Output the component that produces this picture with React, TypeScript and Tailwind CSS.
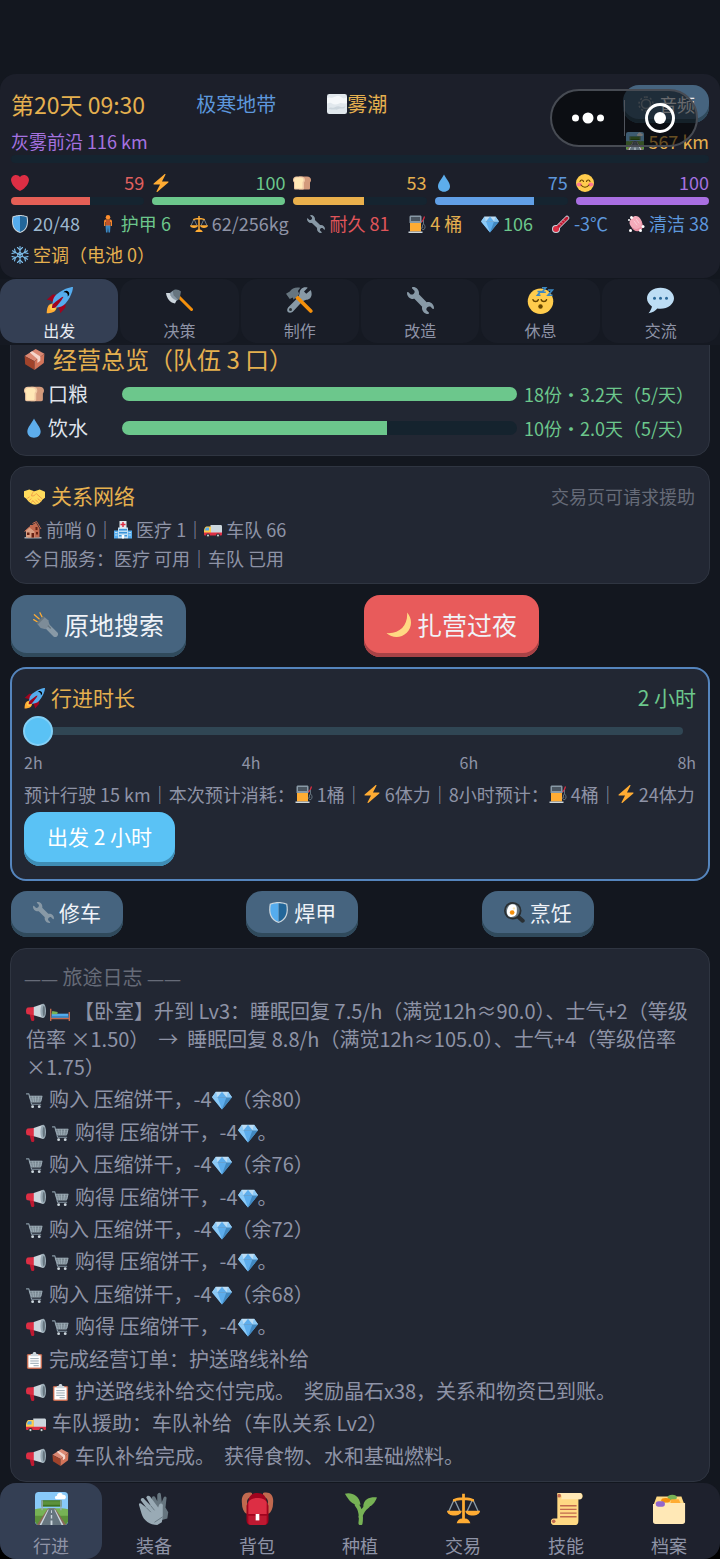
import { useState, type ReactNode } from "react";

const icons: Record<string, ReactNode> = {
  heart: (
    <path
      fill="#DD2E44"
      d="M35.885 11.833c0-5.45-4.418-9.868-9.867-9.868-3.308 0-6.227 1.633-8.018 4.129-1.791-2.496-4.71-4.129-8.017-4.129-5.45 0-9.868 4.417-9.868 9.868 0 .772.098 1.52.266 2.241C1.751 22.587 11.216 31.568 18 34.034c6.783-2.466 16.249-11.447 17.617-19.959.17-.721.268-1.469.268-2.242z"
    />
  ),
  zap: (
    <path
      fill="#FFAC33"
      d="M32.938 15.651C32.792 15.26 32.418 15 32 15H19.925L26.89 1.458c.219-.426.106-.947-.271-1.243C26.437.071 26.218 0 26 0c-.233 0-.466.082-.653.243L18 6.588 3.347 19.243c-.316.273-.43.714-.284 1.105S3.582 21 4 21h12.075L9.11 34.542c-.219.426-.106.947.271 1.243.182.144.401.215.619.215.233 0 .466-.082.653-.243L18 29.412l14.653-12.655c.317-.273.43-.714.285-1.106z"
    />
  ),
  bread: (
    <>
      <path fill="#D39A7C" d="M12 5h16c5 0 8 3 8 7 0 2-1 4-2 5v11c0 2-1 3-3 3H12z" />
      <path fill="#F0C9A4" d="M7 5h9c5 0 8 3 8 7 0 2-1 4-2 5v11c0 2-1 3-3 3H5c-2 0-3-1-3-3V17c-1-1-2-3-2-5 0-4 3-7 7-7z" />
      <path fill="#FFE8B6" d="M8 7h7c4 0 6 2 6 5 0 2-1 3-2 4v11c0 1-1 2-2 2H6c-1 0-2-1-2-2V16c-1-1-2-2-2-4 0-3 3-5 6-5z" />
    </>
  ),
  droplet: <path fill="#5DADEC" d="M18 1C15 8 6 17 6 24.500 6 31 11 35.500 18 35.500S30 31 30 24.500C30 17 21 8 18 1z" />,
  blush: (
    <>
      <circle cx="18" cy="18" r="18" fill="#FFCC4D" />
      <ellipse cx="6.500" cy="21" rx="5" ry="4" fill="#FF7892" />
      <ellipse cx="29.500" cy="21" rx="5" ry="4" fill="#FF7892" />
      <path d="M8 15c1-4 6-4 7 0M21 15c1-4 6-4 7 0M10 22c4 6 12 6 16 0" fill="none" stroke="#664500" strokeWidth="2.200" strokeLinecap="round" />
    </>
  ),
  shield: (
    <>
      <path fill="#CCD6DD" d="M33 3c-7-3-15-3-15-3S10 0 3 3C0 18 3 31 18 36c15-5 18-18 15-33z" />
      <path fill="#55ACEE" d="M18 33.900C6.400 29.700 2 19.800 4.800 4.400 11 2 18 2 18 2z" />
      <path fill="#226699" d="M18 33.900C29.600 29.700 34 19.800 31.200 4.400 25 2 18 2 18 2z" />
    </>
  ),
  person: (
    <>
      <circle cx="18" cy="4.500" r="4.500" fill="#FF8F2E" />
      <path fill="#F4842B" d="M13 9h10c2 0 3 2 3 4v9h-3v-8h-1v9h-8v-9h-1v8h-3v-9c0-2 1-4 3-4z" />
      <path fill="#C1552B" d="M14 10h8v11h-8z" />
      <path fill="#3B88C3" d="M13 21h10l-1 14h-3l-1-11-1 11h-3z" />
    </>
  ),
  scales: (
    <>
      <path fill="none" stroke="#8899A6" strokeWidth="1.500" d="M8 8L2 21M8 8l6 13M28 8l-6 13M28 8l6 13" />
      <path fill="#FFAC33" d="M16.500 2h3v4c4 0 6 .500 9 1.500 1.500 0 1.500 2.500 0 3-4-1.500-6-1.500-9-1.500v20c3 0 5 2 6 5h-15c1-3 3-5 6-5V9c-3 0-5 0-9 1.500-1.500-.500-1.500-3 0-3 3-1 5-1.500 9-1.500z" />
      <path fill="#FFAC33" d="M0 20.500h16c0 7-16 7-16 0zM20 20.500h16c0 7-16 7-16 0z" />
    </>
  ),
  wrench: (
    <path
      fill="#8899A6"
      d="M27.989 19.977c-.622 0-1.225.078-1.806.213L15.811 9.818c.134-.581.212-1.184.212-1.806C16.023 3.587 12.436 0 8.012 0 7.110 0 5.910.916 6.909 1.915l2.997 2.997s.999 1.998-.999 3.995-3.996.998-3.996.998L1.915 6.909C.916 5.910 0 7.105 0 8.012c0 4.425 3.587 8.012 8.012 8.012.622 0 1.225-.078 1.806-.212l10.371 10.371c-.135.581-.213 1.184-.213 1.806 0 4.425 3.588 8.011 8.012 8.011.901 0 2.101-.916 1.102-1.915l-2.997-2.997s-.999-1.998.999-3.995 3.995-.999 3.995-.999l2.997 2.997c1 .999 1.916-.196 1.916-1.102 0-4.425-3.587-8.012-8.011-8.012z"
    />
  ),
  fuel: (
    <>
      <path fill="none" stroke="#DD2E44" strokeWidth="2.500" d="M26 14l4-3 3-8" />
      <path fill="none" stroke="#66757F" strokeWidth="2" d="M31 10v8c-3 2-3 6-1 8M31 18c4 3 4 8 1 11-3 1-5-1-5-4" />
      <path fill="#8899A6" d="M6 1h18c2 0 3 1 3 3v12H3V4c0-2 1-3 3-3z" />
      <path fill="#4a5560" d="M6 4h18v8H6z" />
      <path fill="#FFAC33" d="M4 16h22v17H4z" />
      <path fill="#CCD6DD" d="M1 33h28v3H1z" />
    </>
  ),
  gem: (
    <>
      <path fill="#5DADEC" d="M0 13L18 35 36 13z" />
      <path fill="#8CCAF7" d="M10 13l8 22L0 13z" />
      <path fill="#4289C1" d="M26 13l-8 22 18-22z" />
      <path fill="#BDDDF4" d="M7 3h22l7 10H0z" />
      <path fill="#8CCAF7" d="M7 3l3 10H0zM29 3l-3 10h10z" />
      <path fill="#5DADEC" d="M18 3l-8 10h16z" />
    </>
  ),
  thermometer: (
    <>
      <path stroke="#CCD6DD" strokeWidth="9" strokeLinecap="round" d="M9 27L30 6" />
      <circle cx="8" cy="28" r="8" fill="#CCD6DD" />
      <path stroke="#BE1931" strokeWidth="6" strokeLinecap="round" d="M9 27L30 6" />
      <circle cx="8" cy="28" r="6" fill="#DD2E44" />
      <path stroke="#F4ABBA" strokeWidth="1.500" d="M14 17l4 4M18 13l4 4M22 9l4 4" />
    </>
  ),
  soap: (
    <>
      <path fill="#F4ABBA" d="M10 6c5-6 13-5 17 2 5 8 5 14-1 18-6 5-14 3-18-3C3 16 5 11 10 6z" />
      <path fill="#EA8FA3" d="M26 10c5 8 3 14-3 17-5 2-10 1-14-3 3 8 12 11 19 6 6-5 4-13-2-20z" />
      <g fill="#fff">
        <circle cx="9" cy="5" r="3" />
        <circle cx="4" cy="10" r="2" />
        <circle cx="32" cy="23" r="3" />
        <circle cx="27" cy="31" r="3" />
        <circle cx="7" cy="31" r="3" />
      </g>
      <path stroke="#F9CDD6" strokeWidth="2" strokeLinecap="round" d="M14 12l6 8M19 9l5 7" />
    </>
  ),
  snow: (
    <g fill="none" stroke="#7DBFEC" strokeWidth="2.200" strokeLinecap="round">
      <path d="M18 1v34M3 9.500l30 17M3 26.500l30-17" />
      <path d="M13 3l5 5 5-5M13 33l5-5 5 5M2 15l7-2-2-7M34 15l-7-2 2-7M2 21l7 2-2 7M34 21l-7 2 2 7" />
      <path d="M18 13l4.500 2.500v5L18 23l-4.500-2.500v-5z" />
    </g>
  ),
  fog: (
    <>
      <rect width="36" height="36" rx="4" fill="#E1E8ED" />
      <path fill="#F5F8FA" d="M0 8c5-4 8 0 12-2s10-4 14 0 7 1 10 0v10c-6 3-9-1-14 1s-9 3-13 0-6 1-9 0z" />
      <path fill="#CCD6DD" d="M3 26c4-4 8 0 11-2s7-3 10-1 6 0 9-1c-1 5-6 4-9 4s-5 3-9 2-8 1-12-2z" />
    </>
  ),
  road: (
    <>
      <rect width="36" height="36" rx="4" fill="#88C9F9" />
      <path fill="#5C913B" d="M0 19h36v13c0 2-2 4-4 4H4c-2 0-4-2-4-4z" />
      <path fill="#77B255" d="M0 19c6-2 12-1 18-1s12-1 18 1v7H0z" />
      <path fill="#8A6A58" d="M14 18h8l12 18H2z" />
      <path fill="#66757F" d="M15 18h6l10 18H5z" />
      <path fill="#CCD6DD" d="M17.500 20h1v3h-1zM17.250 25h1.500v4h-1.500zM17 31h2v5h-2zM14 19h1L7 36H5zM21 19h1l9 17h-2z" />
      <path fill="#3E721D" d="M7 9h22v7H7z" />
      <path fill="#5C913B" d="M8 10h20v4H8z" />
      <path fill="#99AAB5" d="M7 9h1.500v11H7zM27.500 9H29v11h-1.500z" />
      <path fill="#fff" d="M24 8c-3 0-3-4 0-4 0-4 6-4 6-1 4-1 5 4 2 5z" />
    </>
  ),
  rocket: (
    <>
      <path fill="#A0041E" d="M1 17l8-7 16 1 1 16-7 8s.001-5.999-6-12-12-6-12-6z" />
      <path fill="#FFAC33" d="M.973 35s-.036-7.979 2.985-11S15 21.187 15 21.187 14.999 29 11.999 32c-3 3-11.026 3-11.026 3z" />
      <circle fill="#FFCC4D" cx="9" cy="27" r="4" />
      <path fill="#55ACEE" d="M35.999 0s-10 0-22 10c-6 5-6 14-4 16s11 2 16-4c10-12 10-22 10-22z" />
      <path d="M26.999 5c-1.623 0-3.013.971-3.641 2.360.502-.227 1.055-.360 1.641-.360 2.209 0 4 1.791 4 4 0 .586-.133 1.139-.359 1.640 1.389-.627 2.359-2.017 2.359-3.640 0-2.209-1.791-4-4-4z" />
      <path fill="#A0041E" d="M8 28s0-4 1-5 13.001-10.999 14-10-9.001 13-10.001 14S8 28 8 28z" />
    </>
  ),
  axe: (
    <>
      <path stroke="#F4900C" strokeWidth="4" strokeLinecap="round" d="M13 9l21 21" />
      <path fill="#66757F" d="M9 5c3-3 8-2 11 1l-2 10-5 3-7-7z" />
      <path fill="#8899A6" d="M9 5L4 9l8 10 4-2-6-6z" />
      <path fill="#CCD6DD" d="M0 8c1 8 6 13 12 14l2-4C9 16 6 13 5 8z" />
    </>
  ),
  tools: (
    <>
      <path fill="#8899A6" d="M33 4l-6 5-3-3 5-5c-6-2-11 2-11 8l-2 5L3 27c-4 5 1 10 6 6l13-14 5-2c6 0 9-6 6-13z" />
      <circle cx="6" cy="30" r="2" fill="#292F33" />
      <path stroke="#F4900C" strokeWidth="5" strokeLinecap="round" d="M14 13l19 19" />
      <path fill="#66757F" d="M19 1C12 0 8 2 5 6L0 9l5 7 4-2 1 3 8-8-2-3c0-2 2-3 3-5z" />
    </>
  ),
  sleeping: (
    <>
      <circle cx="18" cy="19" r="17" fill="#FFCC4D" />
      <path d="M8 17c1 3 6 3 7 0M19 17c1 3 6 3 7 0" fill="none" stroke="#664500" strokeWidth="2" strokeLinecap="round" />
      <ellipse cx="18" cy="26" rx="3" ry="3" fill="#664500" />
      <path d="M14 6h4l-4 5h4M20 1h5l-5 6h5M28 4h6l-6 7h6" fill="none" stroke="#3B88C3" strokeWidth="2.200" />
    </>
  ),
  chat: (
    <>
      <path
        fill="#BDDDF4"
        d="M18 1C8.059 1 0 7.268 0 15c0 4.368 2.574 8.268 6.604 10.835C6.080 28.144 4.859 31.569 2 35c5.758-.960 9.439-3.761 11.716-6.416 1.376.262 2.805.416 4.284.416 9.941 0 18-6.268 18-14S27.941 1 18 1z"
      />
      <g fill="#2A6797">
        <circle cx="10" cy="15" r="2" />
        <circle cx="18" cy="15" r="2" />
        <circle cx="26" cy="15" r="2" />
      </g>
    </>
  ),
  box: (
    <>
      <path fill="#DA8873" d="M1 12L20 0l15 8-17 13z" />
      <path fill="#A0432B" d="M1 12l17 9v15L2 26z" />
      <path fill="#D2745A" d="M35 8L18 21v15l16-12z" />
      <path fill="#F5D6CC" d="M10 6l4-2 14 9v7l-5 4v-7z" />
    </>
  ),
  handshake: (
    <>
      <path fill="#FFDC5D" d="M0 9l9-3 9 3 9-3 9 4v10l-4 3c-3 5-8 9-13 9S8 28 4 22l-4-3z" />
      <path fill="none" stroke="#EF9645" strokeWidth="1.500" strokeLinecap="round" d="M17 9c-3 3-4 6-4 8 4 1 6-2 8-4l10 9M24 22l5 4M20 24l4 4M16 26l4 4M6 21l3-2M9 25l3-3M13 28l2-3" />
    </>
  ),
  house: (
    <>
      <path fill="#99AAB5" d="M1 32h34v3H1z" />
      <path fill="#C1694F" d="M8 16l4-4V8h5L24 3l7 12v18H8z" />
      <path fill="#D99E82" d="M2 20l9-8 10 8v13H4V21z" />
      <path fill="#662113" d="M6 23h5v5H6zM15 24h5v9h-5zM23 12h4v6h-4zM24 22h4v5h-4z" />
      <path stroke="#C1694F" strokeWidth="2" d="M1 21l10-9 10 8M17 5l8-4 9 15" fill="none" />
    </>
  ),
  hospital: (
    <>
      <path fill="#BDDDF4" d="M8 13h20v22H8z" />
      <path fill="#55ACEE" d="M0 19h8v16H0zM28 19h8v16h-8z" />
      <path fill="#E1E8ED" d="M11 0h14v14H11z" />
      <path fill="#DD2E44" d="M16.500 2h3v3.500H23v3h-3.500V12h-3V8.500H13v-3h3.500z" />
      <path fill="#3B94D9" d="M10 16h16v3H10zM10 22h16v3H10zM10 28h5v3h-5zM21 28h5v3h-5z" />
      <path fill="#BDDDF4" d="M2 22h5v2H2zM2 27h5v2H2zM29 22h5v2h-5zM29 27h5v2h-5z" />
      <path fill="#fff" d="M16 28h4v7h-4z" />
    </>
  ),
  truck: (
    <>
      <path fill="#CCD6DD" d="M13 8h20c2 0 3 1 3 3v14H13z" />
      <path fill="#FFCC4D" d="M5 11h9v14H0v-5c0-4 2-9 5-9z" />
      <path fill="#55ACEE" d="M5 13h5v6H2c0-2 1-6 3-6z" />
      <path fill="#DD2E44" d="M0 23h36v4c0 1-1 2-2 2H2c-1 0-2-1-2-2z" />
      <circle cx="8" cy="29" r="4" fill="#292F33" />
      <circle cx="28" cy="29" r="4" fill="#292F33" />
      <circle cx="8" cy="29" r="2" fill="#CCD6DD" />
      <circle cx="28" cy="29" r="2" fill="#CCD6DD" />
    </>
  ),
  flashlight: (
    <>
      <path stroke="#FFAC33" strokeWidth="1.800" strokeLinecap="round" d="M1 11l5 3M2 4l7 6M10 1l3 6" />
      <path stroke="#8899A6" strokeWidth="8" strokeLinecap="round" d="M16 16l16 16" />
      <path fill="#7d8c98" d="M6 17L16 7l6 5 2 7-6 6-7-2z" />
      <path fill="#66757F" d="M5 16L15 6l2 2L7 18z" />
      <path stroke="#66757F" strokeWidth="2" strokeLinecap="round" d="M22 20l3 3" />
    </>
  ),
  moon: <path fill="#FFD983" d="M30.312.776C32 19 20 32 .776 30.312c8.199 7.717 21.091 7.588 29.107-.429C37.900 21.867 38.030 8.975 30.312.776z" />,
  pan: (
    <>
      <path stroke="#292F33" strokeWidth="7" strokeLinecap="round" d="M22 23l10 9" />
      <circle cx="15" cy="15" r="15" fill="#292F33" />
      <circle cx="15" cy="15" r="12" fill="#66757F" />
      <path fill="#fff" d="M13 4c6-1 9 2 9 7s1 12-6 14-11-2-11-8S8 5 13 4z" />
      <circle cx="14" cy="18" r="4" fill="#F4900C" />
      <circle cx="17" cy="11" r="2" fill="#FFE8B6" />
    </>
  ),
  megaphone: (
    <>
      <path fill="#BE1931" d="M6 20h8l1 12c0 3-6 3-6 0z" />
      <path fill="#DD2E44" d="M3 10l13-1v15L3 22c-4-1-4-11 0-12z" />
      <path fill="#CCD6DD" d="M14 9L31 3v26L14 24z" />
      <ellipse cx="31" cy="16" rx="5" ry="13" fill="#99AAB5" />
      <ellipse cx="32" cy="16" rx="2" ry="9" fill="#66757F" />
    </>
  ),
  bed: (
    <>
      <path fill="#C1694F" d="M0 12h2.500v22H0zM33.500 18H36v16h-2.500zM2 28h32v3H2z" />
      <path fill="#55ACEE" d="M3 21h30v7H3z" />
      <path fill="#3B88C3" d="M3 25h30v3H3z" />
      <path fill="#77B255" d="M4 16l10 2-1 4H3z" />
    </>
  ),
  cart: (
    <>
      <path fill="none" stroke="#8899A6" strokeWidth="2.500" strokeLinecap="round" strokeLinejoin="round" d="M1 4h5l6 22h19" />
      <path fill="#66757F" d="M7 8h28l-4 14H11z" />
      <path stroke="#AAB8C2" strokeWidth="1.500" fill="none" d="M7 9h27l-3 12H12zM9 13h25M10 17h23M14 9l2 12M20 9v12M27 9l-2 12" />
      <circle cx="14" cy="31" r="3" fill="#CCD6DD" />
      <circle cx="28" cy="31" r="3" fill="#CCD6DD" />
    </>
  ),
  clipboard: (
    <>
      <rect x="2" y="4" width="32" height="32" rx="3" fill="#C1694F" />
      <path fill="#fff" d="M5 7h26v26H5z" />
      <path fill="#CCD6DD" d="M10 4h4c0-5 8-5 8 0h4v5H10z" />
      <path stroke="#8899A6" strokeWidth="1.800" d="M9 14h18M9 19h18M9 24h18M16 29h11" />
    </>
  ),
  gloves: (
    <>
      <path fill="#66757F" d="M15 7c0-3 3-3 4-1l2 4 0-7c1-3 4-3 4 0l1 8 2-5c1-2 4-1 3 2l-1 9 3 5-1 7-8 2-10-12z" />
      <path fill="#99AAB5" d="M1 14c0-2 2-2 3-1l5 4-6-8c0-3 3-3 4-1l7 7-5-9c1-3 4-2 5 0l8 11 1-3c2-3 5-1 4 2v11l-1 6-5 3C13 36 6 31 4 24z" />
      <path stroke="#66757F" strokeWidth="1" fill="none" d="M9 17l5 5M14 15l4 5M18 33l9-6" />
    </>
  ),
  backpack: (
    <>
      <path fill="#C1694F" d="M12 1C4-1 0 4 1 12c0 6 2 10 5 12l3-8c-4-5-3-9 3-11zM24 1c8-2 12 3 11 11 0 6-2 10-5 12l-3-8c4-5 3-9-3-11z" />
      <path fill="#A0041E" d="M8 10C9 4 12 1 18 1s9 3 10 9l2 5v16c0 3-2 5-4 5H10c-2 0-4-2-4-5V15z" />
      <path fill="#DD2E44" d="M8 11c3-6 17-6 20 0v13H8z" />
      <path fill="#BE1931" d="M8 26h20v7c0 2-1 3-3 3H11c-2 0-3-1-3-3z" />
      <path fill="#fff" d="M16 24h4v7h-4z" />
    </>
  ),
  seedling: (
    <>
      <path fill="none" stroke="#77B255" strokeWidth="4.500" strokeLinecap="round" d="M18 34c1-7 1-14-4-20M18 27c1-5 4-9 8-12" />
      <path fill="#77B255" d="M1 2c6-2 16 1 17 12-9 1-12-4-17-12z" />
      <path fill="#77B255" d="M36 6c-6-1-15 1-15 10 8 2 12-3 15-10z" />
    </>
  ),
  scroll: (
    <>
      <path fill="#FFD983" d="M9 1h24c3 0 4 6 0 7h-2v23c0 3-1 5-3 5H4c-4 0-4-7 0-7h4V5c0-2-1-4 1-4z" />
      <path fill="#FFE8B6" d="M9 1h23c4 0 4 7 0 7H12c2-3 1-6-3-7z" />
      <circle cx="10" cy="4" r="2" fill="#C1694F" />
      <circle cx="4" cy="32" r="2" fill="#C1694F" />
      <path stroke="#C1694F" strokeWidth="1.500" d="M11 15h18M11 19h18M11 23h18M11 27h18" />
    </>
  ),
  cardbox: (
    <>
      <path fill="#FFD983" d="M4 5h27l3 8H1z" />
      <ellipse cx="21" cy="6" rx="5" ry="3" fill="#77B255" />
      <path fill="#FFAC33" d="M20 8h8l2 4H19z" />
      <path fill="#FFE8B6" d="M0 13h3c1 0 2-1 3-1h29v20c0 2-1 3-3 3H3c-2 0-3-1-3-3z" />
      <ellipse cx="14" cy="9" rx="5" ry="2.500" fill="#F4900C" />
      <rect x="3" y="10" width="10" height="6" rx="3" fill="#9266CC" />
    </>
  ),
  gear: (
    <g fill="none" stroke="#8b99a6" strokeWidth="3">
      <circle cx="18" cy="18" r="9" />
      <path strokeDasharray="4 4.250" d="M18 4a14 14 0 1 1-.1 0z" />
    </g>
  ),
};

function Icon({ name, className = "size-[18px]" }: { name: string; className?: string }) {
  return (
    <svg viewBox="0 0 36 36" className={`inline-block shrink-0 ${className}`} aria-hidden="true">
      {icons[name]}
    </svg>
  );
}

const stats = [
  { icon: "heart", value: 59, text: "text-[#e0605f]", bar: "bg-[#e55f56]" },
  { icon: "zap", value: 100, text: "text-[#6cc78c]", bar: "bg-[#6cc78c]" },
  { icon: "bread", value: 53, text: "text-[#e5b04f]", bar: "bg-[#eab04c]" },
  { icon: "droplet", value: 75, text: "text-[#5d97dc]", bar: "bg-[#619fe6]" },
  { icon: "blush", value: 100, text: "text-[#a572e0]", bar: "bg-[#a96fe2]" },
];

const chips = [
  { icon: "shield", label: "20/48", color: "text-[#9cb8cf]" },
  { icon: "person", label: "护甲 6", color: "text-[#6cc78c]" },
  { icon: "scales", label: "62/256kg", color: "text-[#8e93a6]" },
  { icon: "wrench", label: "耐久 81", color: "text-[#e0555a]" },
  { icon: "fuel", label: "4 桶", color: "text-[#e5b04f]" },
  { icon: "gem", label: "106", color: "text-[#6cc78c]" },
  { icon: "thermometer", label: "-3℃", color: "text-[#5d97dc]" },
  { icon: "soap", label: "清洁 38", color: "text-[#5d97dc]" },
  { icon: "snow", label: "空调（电池 0）", color: "text-[#e5b04f]" },
];

const tabs = [
  { icon: "rocket", label: "出发" },
  { icon: "axe", label: "决策" },
  { icon: "tools", label: "制作" },
  { icon: "wrench", label: "改造" },
  { icon: "sleeping", label: "休息" },
  { icon: "chat", label: "交流" },
];

const supplies = [
  { icon: "bread", label: "口粮", percent: 100, detail: "18份・3.2天（5/天）" },
  { icon: "droplet", label: "饮水", percent: 67, detail: "10份・2.0天（5/天）" },
];

const log: { icons: string[]; text: string; gem?: string }[] = [
  {
    icons: ["megaphone", "bed"],
    text: "【卧室】升到 Lv3：睡眠回复 7.5/h（满觉12h≈90.0）、士气+2（等级倍率 ×1.50）\u00a0 →\u00a0 睡眠回复 8.8/h（满觉12h≈105.0）、士气+4（等级倍率 ×1.75）",
  },
  { icons: ["cart"], text: "购入 压缩饼干，-4", gem: "（余80）" },
  { icons: ["megaphone", "cart"], text: "购得 压缩饼干，-4", gem: "。" },
  { icons: ["cart"], text: "购入 压缩饼干，-4", gem: "（余76）" },
  { icons: ["megaphone", "cart"], text: "购得 压缩饼干，-4", gem: "。" },
  { icons: ["cart"], text: "购入 压缩饼干，-4", gem: "（余72）" },
  { icons: ["megaphone", "cart"], text: "购得 压缩饼干，-4", gem: "。" },
  { icons: ["cart"], text: "购入 压缩饼干，-4", gem: "（余68）" },
  { icons: ["megaphone", "cart"], text: "购得 压缩饼干，-4", gem: "。" },
  { icons: ["clipboard"], text: "完成经营订单：护送路线补给" },
  { icons: ["megaphone", "clipboard"], text: "护送路线补给交付完成。\u00a0 奖励晶石x38，关系和物资已到账。" },
  { icons: ["truck"], text: "车队援助：车队补给（车队关系 Lv2）" },
  { icons: ["megaphone", "box"], text: "车队补给完成。\u00a0 获得食物、水和基础燃料。" },
];

const nav = [
  { icon: "road", label: "行进" },
  { icon: "gloves", label: "装备" },
  { icon: "backpack", label: "背包" },
  { icon: "seedling", label: "种植" },
  { icon: "scales", label: "交易" },
  { icon: "scroll", label: "技能" },
  { icon: "cardbox", label: "档案" },
];

const logIconStyles: Record<string, string> = {
  megaphone: "mr-[6px] size-5 align-[-3px]",
  truck: "mr-[6px] size-5 align-[-3px]",
  bed: "-ml-[2px] mr-1 size-5 align-[-3px]",
};

function Header() {
  return (
    <header className="relative mt-[74px] rounded-2xl bg-[#1c1f2a] px-[11px] pt-[11px] pb-[7px] text-[18px]">
      <div className="flex h-[38px] items-center gap-[51px] whitespace-nowrap">
        <h1 className="text-[23px] text-[#e5b04f]">第20天 09:30</h1>
        <span className="text-[20px] text-[#5d97dc]">极寒地带</span>
        <span className="flex items-center text-[20px] text-[#e5b04f]">
          <Icon name="fog" className="size-5" />
          雾潮
        </span>
        <button className="ml-auto flex h-[38px] w-[86px] items-center justify-center gap-1 rounded-2xl bg-[#46647f] text-[#e8ecf2] shadow-[inset_0_-4px_0_#304a5c]">
          <Icon name="gear" />
          音频
        </button>
      </div>
      <div className="mt-[6px] flex h-6 items-center justify-between">
        <span className="text-[#a572e0]">灰雾前沿 116 km</span>
        <span className="flex items-center gap-1 text-[#e5b04f]">
          <Icon name="road" />
          567 km
        </span>
      </div>
      <div className="mt-[2px] h-2 rounded-full bg-[#152430]" />
      <div className="mt-2 grid grid-cols-5 gap-2">
        {stats.map((stat) => (
          <div key={stat.icon}>
            <div className="flex h-[23px] items-center justify-between">
              <Icon name={stat.icon} />
              <span className={stat.text}>{stat.value}</span>
            </div>
            <div className="mt-[3px] h-2 overflow-hidden rounded-full bg-[#152430]">
              <div className={`h-full ${stat.bar}`} style={{ width: `${stat.value}%` }} />
            </div>
          </div>
        ))}
      </div>
      <div className="mt-[3px] flex flex-wrap justify-between gap-x-2 pb-px">
        {chips.map((chip) => (
          <span key={chip.icon} className={`flex h-[31px] items-center gap-1 whitespace-nowrap ${chip.color}`}>
            <Icon name={chip.icon} />
            {chip.label}
          </span>
        ))}
      </div>
      <div className="absolute top-[15px] right-[22px] flex h-[58px] w-[148px] items-center rounded-full border-2 border-[#474b53] bg-black/55">
        <button aria-label="更多" className="flex flex-1 justify-center">
          <svg viewBox="0 0 32 12" className="h-3 w-8 fill-white">
            <circle cx="3.500" cy="6" r="3.500" />
            <circle cx="16" cy="6" r="5.500" />
            <circle cx="28.500" cy="6" r="3.500" />
          </svg>
        </button>
        <span className="h-9 w-px bg-[#50545c]" />
        <button aria-label="关闭" className="flex flex-1 justify-center">
          <svg viewBox="0 0 32 32" className="size-8">
            <circle cx="16" cy="16" r="13.500" fill="none" stroke="#fff" strokeWidth="3" />
            <circle cx="16" cy="16" r="6" fill="#fff" />
          </svg>
        </button>
      </div>
    </header>
  );
}

function Tabs() {
  const [active, setActive] = useState("出发");

  return (
    <nav className="mt-px grid grid-cols-6 gap-[2px] bg-[#151922] pb-[2px]">
      {tabs.map((tab) => (
        <button
          key={tab.label}
          onClick={() => setActive(tab.label)}
          className={`flex h-16 flex-col items-center rounded-2xl pt-2 text-[16px] leading-6 ${
            tab.label === active ? "bg-[#343f54] text-[#e8ecf2]" : "bg-[#191d27] text-[#8e93a6]"
          }`}
        >
          <Icon name={tab.icon} className="mb-1 size-[27px]" />
          {tab.label}
        </button>
      ))}
    </nav>
  );
}

function Supplies() {
  return (
    <section className="-mt-4 rounded-2xl border border-[#2f3541] bg-[#222733] pt-[15px] pr-[14px] pb-[10px] pl-[13px]">
      <h2 className="mb-1 flex items-center gap-2 text-[24px] leading-7 whitespace-nowrap text-[#e5b04f]">
        <Icon name="box" className="size-[21px]" />
        经营总览（队伍 3 口）
      </h2>
      {supplies.map((item) => (
        <div key={item.label} className="flex h-[34px] items-center">
          <div className="flex w-[98px] items-center gap-1 text-[20px] text-[#dfe3ec]">
            <Icon name={item.icon} className="size-5" />
            {item.label}
          </div>
          <div className="h-[14px] flex-1 overflow-hidden rounded-full bg-[#15232e]">
            <div className="h-full bg-[#6cc78c]" style={{ width: `${item.percent}%` }} />
          </div>
          <span className="w-[178px] pl-[7px] text-[18px] whitespace-nowrap text-[#6cc78c]">{item.detail}</span>
        </div>
      ))}
    </section>
  );
}

function Relations() {
  return (
    <section className="rounded-2xl border border-[#2f3541] bg-[#222733] pt-3 pr-[14px] pb-[10px] pl-[13px] text-[18px] text-[#8e93a6]">
      <div className="mb-[2px] flex h-[34px] items-center justify-between">
        <h2 className="flex items-center gap-[6px] text-[21px] text-[#e5b04f]">
          <Icon name="handshake" className="size-[21px]" />
          关系网络
        </h2>
        <span className="text-[#666b78]">交易页可请求援助</span>
      </div>
      <p className="flex h-[29px] items-center whitespace-pre">
        <Icon name="house" />
        <span> 前哨 0｜</span>
        <Icon name="hospital" />
        <span> 医疗 1｜</span>
        <Icon name="truck" />
        <span> 车队 66</span>
      </p>
      <p className="leading-[29px]">今日服务：医疗 可用｜车队 已用</p>
    </section>
  );
}

function Travel() {
  const [hours, setHours] = useState(2);

  return (
    <section className="rounded-2xl border-2 border-[#5585bd] bg-[#222733] px-3 pt-[14px] pb-[13px] text-[18px] text-[#8e93a6]">
      <div className="flex h-[30px] items-center justify-between text-[21px]">
        <label htmlFor="hours" className="flex items-center gap-[6px] text-[#e5b04f]">
          <Icon name="rocket" className="size-[21px]" />
          行进时长
        </label>
        <output htmlFor="hours" className="text-[#6cc78c]">
          {hours} 小时
        </output>
      </div>
      <div className="relative -mx-px mt-[3px] flex h-[30px] items-center">
        <div className="absolute inset-x-[14px] h-2 rounded-full bg-[#304654]" />
        <input
          id="hours"
          type="range"
          min={2}
          max={8}
          step={2}
          value={hours}
          onChange={(e) => setHours(Number(e.target.value))}
          className="relative h-[30px] w-full appearance-none bg-transparent [&::-webkit-slider-thumb]:size-[30px] [&::-webkit-slider-thumb]:appearance-none [&::-webkit-slider-thumb]:rounded-full [&::-webkit-slider-thumb]:border-2 [&::-webkit-slider-thumb]:border-[#83d0f7] [&::-webkit-slider-thumb]:bg-[#5ac2f5]"
        />
      </div>
      <div className="mt-1 flex h-6 items-center justify-between text-[16px]">
        <span>2h</span>
        <span>4h</span>
        <span>6h</span>
        <span>8h</span>
      </div>
      <p className="mt-[6px] flex h-[28px] items-center whitespace-pre">
        <span>预计行驶 15 km｜本次预计消耗：</span>
        <Icon name="fuel" />
        <span> 1桶｜</span>
        <Icon name="zap" />
        <span> 6体力｜8小时预计：</span>
        <Icon name="fuel" />
        <span> 4桶｜</span>
        <Icon name="zap" />
        <span> 24体力</span>
      </p>
      <button className="mt-1 h-[54px] rounded-2xl bg-[#5ac2f5] px-[23px] pb-1 text-[21px] text-white shadow-[inset_0_-4px_0_#3f8db5]">
        出发 {hours} 小时
      </button>
    </section>
  );
}

function ActionButton({ icon, label, className }: { icon: string; label: string; className: string }) {
  return (
    <button className={`flex items-center justify-self-start rounded-2xl px-[22px] pb-[3px] whitespace-nowrap text-[#f0f3f8] ${className}`}>
      <Icon name={icon} className="size-[1em]" />
      {label}
    </button>
  );
}

function Journal() {
  return (
    <section className="mt-px flex flex-1 flex-col rounded-2xl border border-[#2f3541] bg-[#222733] pt-[14px] pr-1 pb-[11px] pl-[13px] text-[20px] leading-7 text-[#8e93a6]">
      <h2 className="mb-1 text-[#666b78]">
        <span className="font-['Noto_Sans'] text-[17px]">——</span> 旅途日志 <span className="font-['Noto_Sans'] text-[17px]">——</span>
      </h2>
      <ul className="flex flex-1 flex-col justify-between pl-[2px]">
        {log.map((entry, i) => (
          <li key={i}>
            {entry.icons.map((icon) => (
              <Icon key={icon} name={icon} className={logIconStyles[icon] ?? "mr-[6px] size-[17px] align-[-2px]"} />
            ))}
            {entry.text}
            {entry.gem && (
              <>
                <Icon name="gem" className="size-5 align-[-3px]" />
                {entry.gem}
              </>
            )}
          </li>
        ))}
      </ul>
    </section>
  );
}

function BottomNav() {
  const [active, setActive] = useState("行进");

  return (
    <div className="mt-px bg-linear-to-b from-[#13171f] from-50% to-black to-50%">
      <nav className="grid grid-cols-7 gap-px rounded-2xl bg-[#1e212d]">
        {nav.map((item) => (
          <button
            key={item.label}
            onClick={() => setActive(item.label)}
            className={`flex h-[76px] flex-col items-center rounded-2xl pt-[9px] text-[18px] leading-6 text-[#8e93a6] ${
              item.label === active ? "bg-[#343f54]" : ""
            }`}
          >
            <Icon name={item.icon} className="mb-2 size-[33px]" />
            {item.label}
          </button>
        ))}
      </nav>
    </div>
  );
}

export default function App() {
  return (
    <div className="flex min-h-screen flex-col bg-[#13171f] font-['Noto_Sans_CJK_SC',sans-serif]">
      <Header />
      <Tabs />
      <main className="flex flex-1 flex-col gap-[10px] overflow-hidden px-[10px]">
        <Supplies />
        <Relations />
        <div className="mt-px grid grid-cols-2 gap-2 px-px">
          <ActionButton icon="flashlight" label="原地搜索" className="h-[62px] gap-[6px] bg-[#46647f] text-[25px] shadow-[inset_0_-4px_0_#304a5c]" />
          <ActionButton icon="moon" label="扎营过夜" className="h-[62px] gap-[6px] bg-[#e85b5b] text-[25px] shadow-[inset_0_-4px_0_#a84246]" />
        </div>
        <Travel />
        <div className="grid grid-cols-3 gap-2 px-px">
          <ActionButton icon="wrench" label="修车" className="h-[46px] gap-[5px] bg-[#46647f] text-[21px] shadow-[inset_0_-4px_0_#304a5c]" />
          <ActionButton icon="shield" label="焊甲" className="h-[46px] gap-[5px] bg-[#46647f] text-[21px] shadow-[inset_0_-4px_0_#304a5c]" />
          <ActionButton icon="pan" label="烹饪" className="h-[46px] gap-[5px] bg-[#46647f] text-[21px] shadow-[inset_0_-4px_0_#304a5c]" />
        </div>
        <Journal />
      </main>
      <BottomNav />
    </div>
  );
}
